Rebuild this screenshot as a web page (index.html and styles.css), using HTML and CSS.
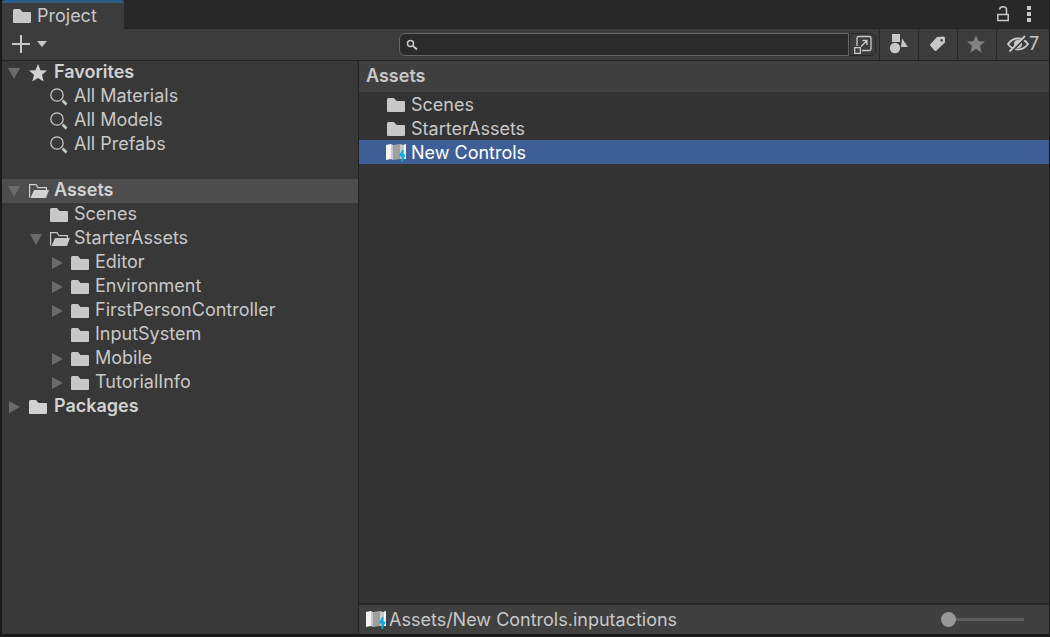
FILE: index.html
```html
<!DOCTYPE html>
<html lang="en">
<head>
    <meta charset="UTF-8">
    <meta name="viewport" content="width=device-width, initial-scale=1.0">
    <title>Project</title>
    <link rel="stylesheet" href="styles.css">
</head>
<body>
    <svg class="sprite" aria-hidden="true">
        <symbol id="folder" viewBox="0 0 20 16">
            <path d="M0 2.500Q0 1 1.500 1H7L9.500 4H17Q18 4 18 5V14Q18 15 17 15H1Q0 15 0 14Z"/>
        </symbol>
        <symbol id="folder-open" viewBox="0 0 20 16">
            <path d="M.6 14.400V1.600H7L9 4.600H17.400V7" fill="none" stroke="currentColor" stroke-width="1.200"/>
            <path d="M5 7H20L17 15H1.500Z"/>
        </symbol>
        <symbol id="star" viewBox="0 0 20 20">
            <path d="M9 1L11.500 7.200L18 7.600L13 11.800L14.700 18.500L9 14.900L3.300 18.500L5 11.800L0 7.600L6.500 7.200Z"/>
        </symbol>
        <symbol id="find" viewBox="0 0 20 20">
            <circle cx="7" cy="8" r="6.200" fill="none" stroke="currentColor" stroke-width="1.300"/>
            <path d="M12.500 13.500L16.500 17.500" stroke="currentColor" stroke-width="2.600"/>
        </symbol>
        <symbol id="down" viewBox="0 0 12 12">
            <path d="M0 1H12L6 12Z"/>
        </symbol>
        <symbol id="right" viewBox="0 0 12 12">
            <path d="M1 0V12L12 6Z"/>
        </symbol>
        <symbol id="controls" viewBox="0 0 22 20">
            <path d="M1 2L6 1V16L1 17Z" fill="#f4f4f4"/>
            <path d="M6 1L8 2V17L6 16Z" fill="#c8c8c8"/>
            <path d="M8 2L15 1V16L8 17Z" fill="#a0a0a0"/>
            <path d="M15 1L18 2L21 1V16L15 16Z" fill="#c8c8c8"/>
            <path d="M19 2L21 1V16H19Z" fill="#f4f4f4"/>
            <path d="M18 7L14 13H17V19L20 12H18Z" fill="#14aada" stroke="#14aada"/>
        </symbol>
    </svg>

    <div class="window">
        <header class="tabs">
            <button class="tab"><svg class="icon folder"><use href="#folder"/></svg>Project</button>
            <div class="tab-tools">
                <button aria-label="Lock">
                    <svg class="outline" width="14" height="18" viewBox="0 0 14 18">
                        <path d="M3.500 4.500Q4 1.800 7 1.800Q10.500 1.800 10.500 5V9" stroke-width="1.600"/>
                        <path d="M1.800 9.500H12.200V15.500H1.800Z" stroke-width="1.500"/>
                    </svg>
                </button>
                <button aria-label="Menu">
                    <svg width="6" height="18" viewBox="0 0 6 18">
                        <path d="M1 1H5V5H1ZM1 7H5V11H1ZM1 13H5V17H1Z"/>
                    </svg>
                </button>
            </div>
        </header>

        <div class="toolbar">
            <button class="add" aria-label="Create">
                <svg width="18" height="18" viewBox="0 0 18 18"><path d="M8 0H10V8H18V10H10V18H8V10H0V8H8Z"/></svg>
                <svg width="10" height="6" viewBox="0 0 10 6"><path d="M0 0H10L5 6Z"/></svg>
            </button>
            <div class="search">
                <label class="field">
                    <svg class="outline" width="12" height="12" viewBox="0 0 12 12">
                        <circle cx="4.500" cy="4.500" r="3" stroke-width="1.500"/>
                        <path d="M7 7L11 10.500" stroke-width="1.800"/>
                    </svg>
                    <input type="text" aria-label="Search">
                </label>
                <button class="popout" aria-label="Open in Search">
                    <svg class="outline" width="20" height="20" viewBox="0 0 20 20" stroke-width="1.300">
                        <path d="M4 11V3Q4 1.500 5.500 1.500H16.500Q18 1.500 18 3V14Q18 15.500 16.500 15.500H9"/>
                        <path d="M1.700 12.700H7.300V18.300H1.700ZM8 11.500L14 5.500M9.500 5.500H14V10"/>
                    </svg>
                </button>
            </div>
            <button class="tool" aria-label="Search by Type">
                <svg width="20" height="22" viewBox="0 0 20 22">
                    <path d="M3 1H11V9H3ZM13 5.500L19 14H12Z"/>
                    <circle cx="6" cy="15" r="5.200"/>
                </svg>
            </button>
            <button class="tool" aria-label="Search by Label">
                <svg width="18" height="18" viewBox="0 0 18 18">
                    <path fill-rule="evenodd" d="M8 2L14.500 1.500Q16 1.500 16 3V7.500L7.500 15.500Q6.500 16.500 5.500 15.500L1.500 11Q.5 10 1.500 9ZM12.500 4A1.300 1.300 0 1 0 12.600 4Z"/>
                </svg>
            </button>
            <button class="tool dim" aria-label="Save search"><svg class="icon"><use href="#star"/></svg></button>
            <button class="tool hidden-items" aria-label="Hidden packages 7">
                <svg width="22" height="20" viewBox="0 0 22 20">
                    <path d="M1 10Q5 4.500 11 4.500Q17 4.500 21 10Q17 15.500 11 15.500Q5 15.500 1 10Z" fill="none" stroke="currentColor" stroke-width="1.800"/>
                    <circle cx="11" cy="10" r="4"/>
                    <path d="M4 18L19 3" stroke="#3c3c3c" stroke-width="2"/>
                    <path d="M2.500 17.500L18 2" stroke="currentColor" stroke-width="1.800"/>
                </svg>7
            </button>
        </div>

        <div class="panes">
            <nav class="tree">
                <ul>
                    <li>
                        <button class="row root"><svg class="twisty"><use href="#down"/></svg><svg class="icon"><use href="#star"/></svg>Favorites</button>
                        <ul>
                            <li><button class="row level-1"><svg class="icon"><use href="#find"/></svg>All Materials</button></li>
                            <li><button class="row level-1"><svg class="icon"><use href="#find"/></svg>All Models</button></li>
                            <li><button class="row level-1"><svg class="icon"><use href="#find"/></svg>All Prefabs</button></li>
                        </ul>
                    </li>
                </ul>
                <ul>
                    <li>
                        <button class="row root current"><svg class="twisty"><use href="#down"/></svg><svg class="icon folder"><use href="#folder-open"/></svg>Assets</button>
                        <ul>
                            <li><button class="row level-1"><svg class="icon folder"><use href="#folder"/></svg>Scenes</button></li>
                            <li>
                                <button class="row level-1"><svg class="twisty"><use href="#down"/></svg><svg class="icon folder"><use href="#folder-open"/></svg>StarterAssets</button>
                                <ul>
                                    <li><button class="row level-2"><svg class="twisty"><use href="#right"/></svg><svg class="icon folder"><use href="#folder"/></svg>Editor</button></li>
                                    <li><button class="row level-2"><svg class="twisty"><use href="#right"/></svg><svg class="icon folder"><use href="#folder"/></svg>Environment</button></li>
                                    <li><button class="row level-2"><svg class="twisty"><use href="#right"/></svg><svg class="icon folder"><use href="#folder"/></svg>FirstPersonController</button></li>
                                    <li><button class="row level-2"><svg class="icon folder"><use href="#folder"/></svg>InputSystem</button></li>
                                    <li><button class="row level-2"><svg class="twisty"><use href="#right"/></svg><svg class="icon folder"><use href="#folder"/></svg>Mobile</button></li>
                                    <li><button class="row level-2"><svg class="twisty"><use href="#right"/></svg><svg class="icon folder"><use href="#folder"/></svg>TutorialInfo</button></li>
                                </ul>
                            </li>
                        </ul>
                    </li>
                    <li><button class="row root"><svg class="twisty"><use href="#right"/></svg><svg class="icon folder"><use href="#folder"/></svg>Packages</button></li>
                </ul>
            </nav>

            <main class="content">
                <h1>Assets</h1>
                <ul class="files">
                    <li><button class="row"><svg class="icon folder"><use href="#folder"/></svg>Scenes</button></li>
                    <li><button class="row"><svg class="icon folder"><use href="#folder"/></svg>StarterAssets</button></li>
                    <li><button class="row selected"><svg class="icon asset"><use href="#controls"/></svg>New Controls</button></li>
                </ul>
                <footer class="status">
                    <svg class="icon asset"><use href="#controls"/></svg>
                    <span>Assets/New Controls.inputactions</span>
                    <input type="range" min="0" max="100" value="0" aria-label="Icon size">
                </footer>
            </main>
        </div>
    </div>
</body>
</html>
```
FILE: styles.css
```css
* {
    box-sizing: border-box;
}
body {
    margin: 0;
    background-color: #191919;
    color: #c8c8c8;
    font: 18px/24px Inter, "Liberation Sans", sans-serif;
}
button, input {
    margin: 0;
    padding: 0;
    border: 0;
    background: none;
    color: inherit;
    font: inherit;
}
button {
    display: flex;
    align-items: center;
}
ul {
    margin: 0;
    padding: 0;
    list-style: none;
}
svg {
    flex: none;
    fill: currentColor;
}
.outline {
    fill: none;
    stroke: currentColor;
}
.sprite {
    display: none;
}
.icon {
    width: 20px;
    height: 20px;
}
.icon.folder {
    height: 16px;
}
.icon.asset {
    width: 22px;
}
.window {
    display: flex;
    flex-direction: column;
    height: 100vh;
    padding: 0 1px 3px 2px;
}

/* tab strip */
.tabs {
    display: flex;
    justify-content: space-between;
    height: 29px;
    background-color: #282828;
    border-bottom: 1px solid #232323;
}
.tab {
    gap: 4px;
    height: 29px;
    padding: 0 27px 0 11px;
    background-color: #3c3c3c;
    border-top: 3px solid #2c5d87;
    border-radius: 3px 3px 0 0;
}
.tab-tools {
    display: flex;
    align-items: center;
    gap: 16px;
    padding-right: 17px;
}

/* toolbar */
.toolbar {
    display: flex;
    height: 32px;
    background-color: #3c3c3c;
    border-bottom: 1px solid #232323;
}
.add {
    gap: 7px;
    margin-right: auto;
    padding: 0 0 1px 10px;
}
.search {
    display: flex;
    align-items: center;
    width: 477px;
    margin-right: 3px;
}
.field {
    display: flex;
    flex: 1;
    align-items: center;
    gap: 6px;
    height: 23px;
    padding-left: 6px;
    background-color: #2a2a2a;
    border: 1px solid #666;
    border-radius: 6px 0 0 6px;
}
.field input {
    flex: 1;
    min-width: 0;
    outline: none;
}
.popout {
    justify-content: center;
    width: 27px;
    height: 23px;
    border: 1px solid #282828;
    border-radius: 0 6px 6px 0;
}
.tool {
    justify-content: center;
    width: 39px;
    padding-bottom: 1px;
    border-left: 1px solid #272727;
}
.tool.dim {
    color: #818181;
}
.tool.hidden-items {
    width: 53px;
}

/* panes */
.panes {
    display: flex;
    flex: 1;
    min-height: 0;
}
.tree {
    width: 357px;
    overflow: hidden;
    background-color: #383838;
    border-right: 1px solid #222;
}
.tree > ul + ul {
    margin-top: 22px;
}
.row {
    gap: 4px;
    width: 100%;
    height: 24px;
    padding-left: 28px;
    white-space: nowrap;
}
.tree .row {
    padding-bottom: 2px;
}
.tree .row svg {
    margin-top: 2px;
}
.twisty {
    width: 12px;
    height: 12px;
    margin-right: 4px;
    color: #6b6b6b;
}
.tree .root {
    gap: 5px;
    padding-left: 6px;
    color: #d2d2d2;
    font-weight: 600;
}
.tree .current {
    background-color: #4d4d4d;
}
.tree .level-1 {
    padding-left: 48px;
}
.tree .level-2 {
    padding-left: 69px;
}
.tree .level-1:has(.twisty) {
    padding-left: 28px;
}
.tree .level-2:has(.twisty) {
    padding-left: 49px;
}
.content {
    display: flex;
    flex: 1;
    flex-direction: column;
    min-width: 0;
    background-color: #333;
}
h1 {
    margin: 0;
    padding: 3px 7px 4px;
    background-color: #404040;
    font-size: 18px;
    font-weight: 600;
}
.files {
    flex: 1;
}
.files .row {
    padding-top: 1px;
}
.files .row:has(.asset) {
    padding-left: 26px;
}
.selected {
    background-color: #3e5f96;
    color: #fff;
}
.status {
    display: flex;
    align-items: center;
    gap: 2px;
    height: 31px;
    padding: 0 25px 0 6px;
    background-color: #404040;
    border-top: 2px solid #272727;
}
.status input {
    width: 83px;
    margin-left: auto;
    appearance: none;
}
.status input::-webkit-slider-runnable-track {
    height: 3px;
    background-color: #5e5e5e;
}
.status input::-webkit-slider-thumb {
    width: 15px;
    height: 15px;
    margin-top: -6px;
    background-color: #999;
    border-radius: 50%;
    appearance: none;
}
```
